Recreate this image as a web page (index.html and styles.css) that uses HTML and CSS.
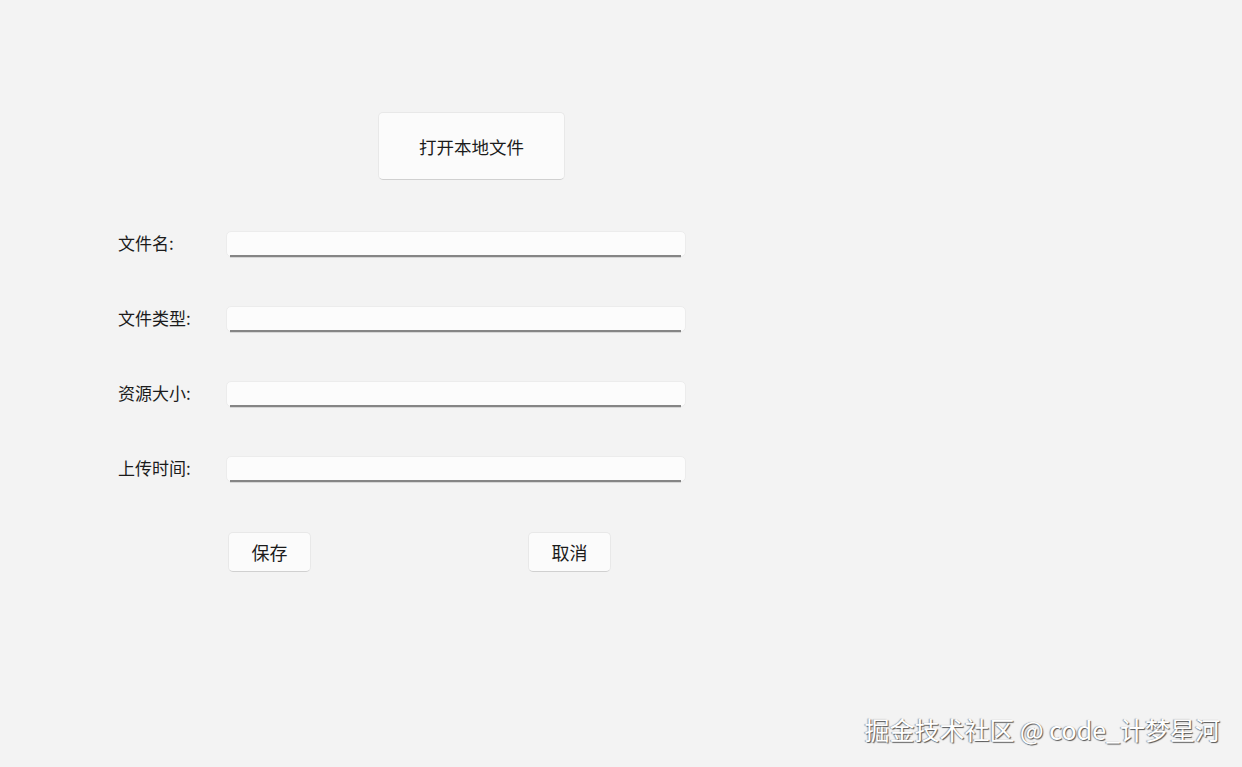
FILE: index.html
```html
<!DOCTYPE html>
<html lang="zh-CN">
<head>
    <meta charset="UTF-8">
    <meta name="viewport" content="width=device-width, initial-scale=1.0">
    <title>上传资源</title>
    <link rel="stylesheet" href="styles.css">
</head>
<body>
    <div class="page">
        <div class="open-row">
            <button type="button" class="open-btn">打开本地文件</button>
        </div>

        <form class="upload-form">
            <div class="field">
                <label for="name">文件名:</label>
                <span class="input-box"><input type="text" id="name"></span>
            </div>
            <div class="field">
                <label for="type">文件类型:</label>
                <span class="input-box"><input type="text" id="type"></span>
            </div>
            <div class="field">
                <label for="size">资源大小:</label>
                <span class="input-box"><input type="text" id="size"></span>
            </div>
            <div class="field">
                <label for="time">上传时间:</label>
                <span class="input-box"><input type="text" id="time"></span>
            </div>

            <div class="actions">
                <button type="button" class="small-btn">保存</button>
                <button type="button" class="small-btn">取消</button>
            </div>
        </form>
    </div>

    <div class="watermark">掘金技术社区 @ code_计梦星河</div>
</body>
</html>
```

FILE: styles.css
```css
body {
    margin: 0;
    height: 767px;
    background: #f3f3f3;
    font-family: "Noto Sans CJK SC", "Noto Sans", sans-serif;
    color: #1b1b1b;
    position: relative;
    overflow: hidden;
}

.page {
    padding: 112px 0 0 118px;
}

.open-row {
    padding-left: 260px;
}

button {
    font-family: inherit;
    color: #1b1b1b;
    background: #fbfbfb;
    border: 1px solid #e8e8e8;
    border-bottom-color: #d0d0d0;
    border-radius: 5px;
    cursor: pointer;
    padding: 0;
}

.open-btn {
    width: 187px;
    height: 68px;
    font-size: 17.5px;
}

.upload-form {
    display: flex;
    flex-direction: column;
    gap: 49px;
    margin-top: 51px;
}

.field {
    display: flex;
    align-items: center;
    height: 26px;
}

label {
    width: 108px;
    font-size: 17px;
    line-height: 24px;
    margin-top: -2px;
}

.input-box {
    position: relative;
    display: block;
}

.input-box::after {
    content: "";
    position: absolute;
    left: 4px;
    right: 5px;
    bottom: -1px;
    height: 2px;
    background: #858585;
    border-bottom: 1px solid #d6d6d6;
}

input[type="text"] {
    display: block;
    box-sizing: border-box;
    width: 460px;
    height: 26px;
    border: 1px solid #ececec;
    border-radius: 5px;
    background: #fcfcfc;
    outline: none;
}

.actions {
    display: flex;
    gap: 217px;
    padding-left: 110px;
    margin-top: 1px;
}

.small-btn {
    width: 83px;
    height: 40px;
    font-size: 18px;
}

.watermark {
    position: absolute;
    right: 22px;
    bottom: 20px;
    font-size: 25px;
    color: #ffffff;
    text-shadow: 1px 1px 1px #555, -1px 0 1px #999;
}
```
